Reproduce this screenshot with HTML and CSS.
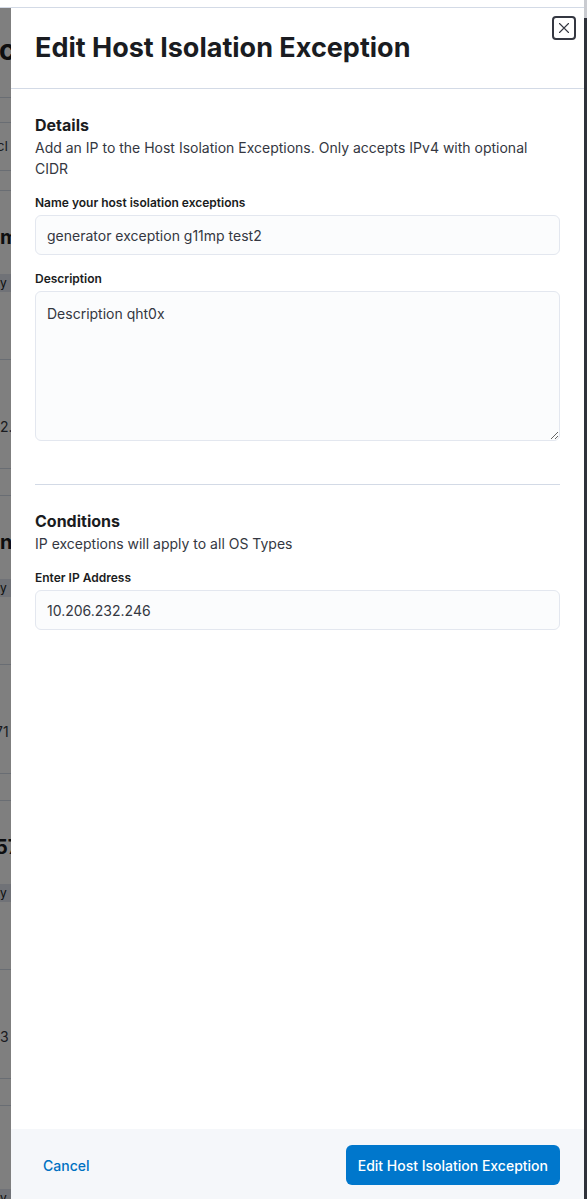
FILE: index.html
```html
<!DOCTYPE html>
<html lang="en">
<head>
<meta charset="utf-8">
<title>Edit Host Isolation Exception</title>
<link rel="stylesheet" href="styles.css">
</head>
<body>
<div class="page">
  <header class="page-header"></header>
  <main class="page-main">
    <section class="bg-top">
      <div class="bg-title-row"><span class="bg-title">cc</span></div>
      <div class="bg-tabs"></div>
      <div class="bg-search"><span class="bg-search-text">cI</span></div>
      <div class="bg-gap"></div>
    </section>
    <article class="bg-card">
      <div class="bg-card-title">m</div>
      <div class="bg-badge">y</div>
      <div class="bg-card-sep"></div>
      <div class="bg-card-value">2..</div>
      <div class="bg-card-sep bg-card-foot"></div>
    </article>
    <article class="bg-card">
      <div class="bg-card-title">n4</div>
      <div class="bg-badge">y</div>
      <div class="bg-card-sep"></div>
      <div class="bg-card-value shift">71</div>
      <div class="bg-card-sep bg-card-foot"></div>
    </article>
    <article class="bg-card">
      <div class="bg-card-title shift">57</div>
      <div class="bg-badge">y</div>
      <div class="bg-card-sep"></div>
      <div class="bg-card-value">3</div>
      <div class="bg-card-sep bg-card-foot"></div>
    </article>
    <article class="bg-card bg-card-last">
      <div class="bg-badge">y</div>
    </article>
  </main>
</div>

<div class="mask"></div>
<div class="edge-bar"><div class="edge-bar-top"></div></div>

<aside class="flyout" role="dialog" aria-labelledby="flyout-title">
  <button class="close-btn" type="button" aria-label="Close this dialog">
    <svg width="16" height="16" viewBox="0 0 16 16" aria-hidden="true">
      <path d="M3.5 3.5 L12.5 12.5 M12.5 3.5 L3.5 12.5" stroke="#343741" stroke-width="1.1" fill="none" stroke-linecap="round"/>
    </svg>
  </button>
  <div class="flyout-header">
    <h2 id="flyout-title" class="flyout-title">Edit Host Isolation Exception</h2>
  </div>
  <div class="flyout-body">
    <h3 class="section-title">Details</h3>
    <p class="section-text">Add an IP to the Host Isolation Exceptions. Only accepts IPv4 with optional CIDR</p>

    <div class="form-row">
      <label class="form-label" for="name">Name your host isolation exceptions</label>
      <input class="field" id="name" type="text" value="generator exception g11mp test2">
    </div>

    <div class="form-row">
      <label class="form-label" for="desc">Description</label>
      <textarea class="field area" id="desc">Description qht0x</textarea>
    </div>

    <hr class="divider">

    <h3 class="section-title">Conditions</h3>
    <p class="section-text">IP exceptions will apply to all OS Types</p>

    <div class="form-row">
      <label class="form-label" for="ip">Enter IP Address</label>
      <input class="field" id="ip" type="text" value="10.206.232.246">
    </div>
  </div>
  <div class="flyout-footer">
    <button class="btn-empty" type="button">Cancel</button>
    <button class="btn-primary" type="button">Edit Host Isolation Exception</button>
  </div>
</aside>
</body>
</html>
```

FILE: styles.css
```css
* { box-sizing: border-box; }

html, body {
  margin: 0;
  padding: 0;
  height: 100%;
  overflow: hidden;
}

body {
  font-family: Inter, "Noto Sans", "DejaVu Sans", sans-serif;
  color: #343741;
  background: #ffffff;
}

/* ---------- background page (seen through the mask) ---------- */
.page {
  display: flex;
  flex-direction: column;
  height: 100vh;
  overflow: hidden;
}

.page-header {
  flex: none;
  height: 8px;
  background: #ffffff;
  border-bottom: 1px solid #d3dae6;
}

.page-main {
  display: flex;
  flex-direction: column;
}

.bg-top {
  display: flex;
  flex-direction: column;
}

.bg-title-row {
  height: 90px;
  padding-top: 25px;
  border-bottom: 1px solid #d3dae6;
}

.bg-title {
  display: block;
  margin-left: -1px;
  font-weight: 700;
  font-size: 28px;
  line-height: 34px;
  color: #1a1c21;
}

.bg-tabs {
  height: 25px;
  border-bottom: 1px solid #d3dae6;
}

.bg-search {
  height: 48px;
  padding-top: 13px;
  border-bottom: 1px solid #d3dae6;
}

.bg-search-text {
  display: block;
  margin-left: -3px;
  font-size: 13px;
  line-height: 20px;
  color: #343741;
}

.bg-gap {
  height: 19px;
}

.bg-card {
  flex: none;
  height: 305px;
  border-top: 1px solid #d3dae6;
  display: flex;
  flex-direction: column;
}

.bg-card-last {
  height: 100px;
  padding-top: 58px;
}

.bg-card-title {
  margin-top: 34px;
  font-weight: 700;
  font-size: 20px;
  line-height: 24px;
  color: #1a1c21;
}

.bg-badge {
  margin-top: 25px;
  width: 40px;
  height: 18px;
  background: #e0e5ee;
  font-size: 12px;
  line-height: 18px;
  color: #1a1c21;
}

.bg-card-sep {
  margin-top: 67px;
  height: 1px;
  background: #d3dae6;
}

.bg-card-value {
  margin-top: 57px;
  font-size: 14px;
  line-height: 20px;
  color: #343741;
}

.bg-card-foot {
  margin-top: 31px;
}

.shift { margin-left: -5px; }

.mask {
  position: fixed;
  top: 8px;
  left: 0;
  right: 0;
  bottom: 0;
  background: rgba(0, 0, 0, 0.5);
}

.edge-bar {
  position: fixed;
  top: 0;
  right: 0;
  bottom: 0;
  width: 3px;
  background: #2f323a;
}

.edge-bar-top {
  height: 18px;
  background: #c9cbd0;
}

/* ---------- flyout ---------- */
.flyout {
  position: fixed;
  top: 8px;
  left: 11px;
  right: 3px;
  bottom: 0;
  background: #ffffff;
  display: flex;
  flex-direction: column;
}

.close-btn {
  position: absolute;
  top: 8px;
  right: 8px;
  width: 24px;
  height: 24px;
  padding: 0;
  border: 2px solid #343741;
  border-radius: 4px;
  background: #ffffff;
  display: flex;
  align-items: center;
  justify-content: center;
  cursor: pointer;
}

.close-btn svg { display: block; }

.flyout-header {
  padding: 24px 24px;
  border-bottom: 1px solid #d3dae6;
}

.flyout-title {
  margin: 0;
  font-size: 27px;
  line-height: 32px;
  font-weight: 700;
  color: #1a1c21;
}

.flyout-body {
  flex: 1;
  padding: 24px 24px 0;
  overflow: hidden;
}

.section-title {
  margin: 0;
  font-size: 16px;
  line-height: 24px;
  font-weight: 700;
  color: #1a1c21;
}

.section-text {
  margin: 0;
  font-size: 14px;
  line-height: 21px;
  color: #343741;
}

.form-row {
  display: flex;
  flex-direction: column;
  gap: 4px;
  margin-top: 16px;
}

.form-label {
  font-size: 12px;
  line-height: 16px;
  font-weight: 600;
  color: #1a1c21;
}

.field {
  display: block;
  width: 100%;
  height: 40px;
  margin: 0;
  padding: 0 11px;
  font-family: Inter, "Noto Sans", sans-serif;
  font-size: 14px;
  color: #343741;
  background: #fbfcfd;
  border: 1px solid #e3e7ef;
  border-radius: 6px;
  outline: none;
}

.area {
  height: 150px;
  padding: 11px 11px;
  line-height: 21px;
  resize: vertical;
}

.divider {
  margin: 43px 0 24px;
  border: 0;
  height: 1px;
  background: #d3dae6;
}

.flyout-footer {
  display: flex;
  align-items: flex-start;
  justify-content: space-between;
  padding: 16px 24px 14px;
  background: #f5f7fa;
}

.btn-empty {
  height: 40px;
  padding: 0 8px;
  border: 0;
  background: transparent;
  font-family: Inter, "Noto Sans", sans-serif;
  font-size: 14px;
  font-weight: 500;
  color: #0071c2;
  cursor: pointer;
}

.btn-primary {
  height: 40px;
  padding: 0 12px;
  border: 0;
  border-radius: 6px;
  background: #0077cc;
  font-family: Inter, "Noto Sans", sans-serif;
  font-size: 14px;
  font-weight: 500;
  color: #ffffff;
  cursor: pointer;
}
```
